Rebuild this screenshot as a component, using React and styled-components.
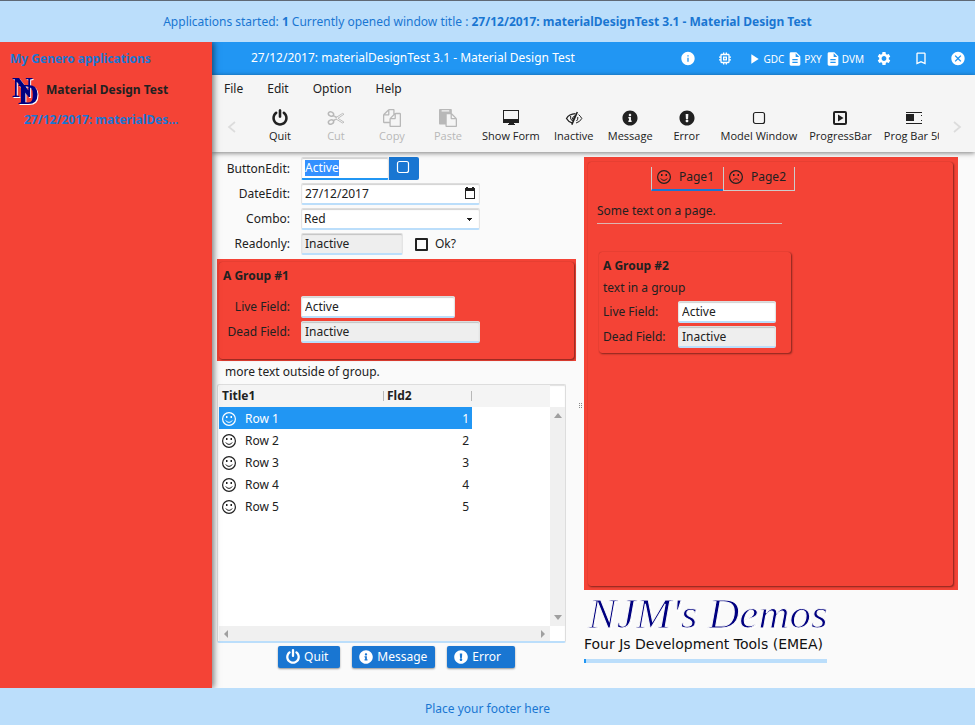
import React, { useEffect, useRef } from 'react';
import styled, { createGlobalStyle } from 'styled-components';
import {
  MdInfo, MdMemory, MdPlayArrow, MdDescription, MdSettings, MdBookmarkBorder, MdCancel,
} from 'react-icons/md';
import { FaInfoCircle, FaExclamationCircle } from 'react-icons/fa';

const GlobalStyle = createGlobalStyle`
  * { box-sizing: border-box; }
  body {
    margin: 0;
    font-family: "Noto Sans", sans-serif;
    font-size: 12px;
    line-height: 16px;
    color: #212121;
    background: #fafafa;
  }
  button, input, select { font: inherit; color: inherit; }
  button { border: 0; padding: 0; background: none; }
`;

const red = '#f44336';
const paleBlue = '#bbdefb';
const blue = '#1976d2';

/* ---------- icons ---------- */

const Svg = styled.svg`
  display: block;
  flex: none;
`;

const PowerIcon = ({ size = 18 }) => (
  <Svg width={size} height={size} viewBox="0 0 1792 1792" fill="currentColor">
    <path d="M1664 896q0 156-61 298t-164 245-245 164-298 61-298-61-245-164-164-245-61-298q0-182 80.5-343t226.5-270q43-32 95.5-25t83.5 50q32 42 24.5 94.5t-49.5 84.5q-98 74-151.5 181t-53.5 228q0 104 40.5 198.5t109.5 163.5 163.5 109.5 198.5 40.5 198.5-40.5 163.5-109.5 109.5-163.5 40.5-198.5q0-121-53.5-228t-151.5-181q-42-32-49.5-84.5t24.5-94.5q31-43 84-50t95 25q146 109 226.5 270t80.5 343zm-640-768v640q0 52-38 90t-90 38-90-38-38-90v-640q0-52 38-90t90-38 90 38 38 90z" />
  </Svg>
);

const CutIcon = () => (
  <Svg width="18" height="18" viewBox="0 0 18 18" fill="none" stroke="currentColor">
    <ellipse cx="4" cy="5" rx="2.7" ry="2.1" strokeWidth="1.5" transform="rotate(25 4 5)" />
    <ellipse cx="4" cy="13" rx="2.7" ry="2.1" strokeWidth="1.5" transform="rotate(-25 4 13)" />
    <path d="M6 6.8 9 8.6 15.5 4.4 17 5.2 11 9.3 17 13.2 15.5 14 9 10 6 11.4M6.4 6.4 10 8.2M6.4 12 10 9.8" strokeWidth="0.9" />
  </Svg>
);

const CopyIcon = () => (
  <Svg width="18" height="18" viewBox="0 0 1792 1792" fill="currentColor">
    <path d="M1696 384q40 0 68 28t28 68v1216q0 40-28 68t-68 28h-960q-40 0-68-28t-28-68v-288h-544q-40 0-68-28t-28-68v-672q0-40 20-88t48-76l408-408q28-28 76-48t88-20h416q40 0 68 28t28 68v328q68-40 128-40h416zm-544 213l-299 299h299v-299zm-640-384l-299 299h299v-299zm196 647l316-316v-416h-384v416q0 40-28 68t-68 28h-416v640h512v-256q0-40 20-88t48-76zm956 804v-1152h-384v416q0 40-28 68t-68 28h-416v640h896z" />
  </Svg>
);

const PasteIcon = () => (
  <Svg width="18" height="18" viewBox="0 0 1792 1792" fill="currentColor">
    <path d="M768 1664h896v-640h-416q-40 0-68-28t-28-68v-416h-384v1152zm256-1440v-64q0-13-9.5-22.5t-22.5-9.5h-704q-13 0-22.5 9.5t-9.5 22.5v64q0 13 9.5 22.5t22.5 9.5h704q13 0 22.5-9.5t9.5-22.5zm256 672h299l-299-299v299zm512 128v672q0 40-28 68t-68 28h-960q-40 0-68-28t-28-68v-160h-544q-40 0-68-28t-28-68v-1344q0-40 28-68t68-28h1088q40 0 68 28t28 68v328q21 13 36 28l408 408q28 28 48 76t20 88z" />
  </Svg>
);

const DesktopIcon = () => (
  <Svg width="18" height="18" viewBox="0 0 18 18" fill="currentColor">
    <path d="M1 1h16v13h-5v1h1v1H6v-1h1v-1H1zM2 2v8h14V2z" fillRule="evenodd" />
  </Svg>
);

const EyeSlashIcon = () => (
  <Svg width="18" height="18" viewBox="0 0 18 18" fill="none" stroke="currentColor">
    <path d="M7 13.800Q3.500 13 1.500 9.500 4 5 10.500 4.700" strokeWidth="1.300" />
    <path d="M13.600 5.600Q15.500 7 16.800 9.500 15 13 11 14" strokeWidth="1" />
    <path d="M12.300 3 6.800 15.600" strokeWidth="1.600" />
    <path d="M5.600 7Q5 10.500 7.500 12L10.300 6.500Q7 8 7.300 10.500M12.800 8Q13.300 10.500 11.500 12" strokeWidth="1" />
  </Svg>
);

const SquareIcon = ({ size = 18 }) => (
  <Svg width={size} height={size} viewBox="0 0 18 18" fill="none" stroke="currentColor" strokeWidth="1.200">
    <rect x="3.500" y="3.500" width="11" height="11" rx="2" />
  </Svg>
);

const PlaySquareIcon = () => (
  <Svg width="18" height="18" viewBox="0 0 18 18">
    <rect x="3" y="3" width="12" height="12" rx="1" fill="none" stroke="currentColor" strokeWidth="2" />
    <path d="M7 5.500v7l5.500-3.500z" fill="currentColor" />
  </Svg>
);

const HalfBarIcon = () => (
  <Svg width="18" height="18" viewBox="0 0 18 18" fill="currentColor">
    <path d="M1 3h16v1H1zM1 14h16v1H1zM1 5h8v7H1zM16 6h1v1h-1zM16 11h1v1h-1z" />
  </Svg>
);

const FaceIcon = ({ sad }) => (
  <Svg width="16" height="16" viewBox="0 0 16 16" fill="none" stroke="currentColor">
    <circle cx="8" cy="8" r="6.400" strokeWidth="1.200" />
    <path d={sad ? 'M5 11.500Q8 8 11 11.500' : 'M4.800 9.400Q5.800 11.400 8 11.400T11.200 9.400'} strokeWidth="1" />
    <path d="M5 5h1.500v2H5zM9.500 5H11v2H9.500z" fill="currentColor" stroke="none" />
  </Svg>
);

const CalendarIcon = () => (
  <Svg width="12" height="12" viewBox="0 0 12 12" fill="currentColor">
    <path d="M1 1h1V0h2v1h4V0h2v1h1v11H1zM2 4v7h8V4z" fillRule="evenodd" />
  </Svg>
);

const Chevron = ({ flip }) => (
  <Svg width="12" height="14" viewBox="0 0 12 14" fill="none" stroke="currentColor" strokeWidth="1.700">
    <path d={flip ? 'M3 2l6 5-6 5' : 'M9 2L3 7l6 5'} />
  </Svg>
);

const arrows = {
  up: 'M0 5l4-5 4 5z',
  down: 'M0 0l4 5 4-5z',
  left: 'M5 0v8L1 4z',
  right: 'M1 0v8l4-4z',
};
const Arrow = ({ dir }) => {
  const vertical = dir === 'up' || dir === 'down';
  const w = vertical ? 8 : 6;
  const h = vertical ? 5 : 8;
  return (
    <Svg width={w} height={h} viewBox={`0 0 ${w} ${h}`} fill="#a0a0a0"><path d={arrows[dir]} /></Svg>
  );
};

/* ---------- page frame ---------- */

const Page = styled.div`
  min-height: 100vh;
  display: flex;
  flex-direction: column;
`;

const Banner = styled.header`
  height: 42px;
  flex: none;
  display: flex;
  align-items: center;
  justify-content: center;
  border-top: 1px solid #5f6975;
  background: ${paleBlue};
  color: ${blue};
`;

const Footer = styled.footer`
  height: 37px;
  flex: none;
  display: flex;
  align-items: center;
  justify-content: center;
  padding-top: 4px;
  background: ${paleBlue};
  color: ${blue};
`;

const Body = styled.div`
  flex: 1;
  display: flex;
`;

const Sidebar = styled.aside`
  width: 212px;
  flex: none;
  position: relative;
  z-index: 1;
  padding: 9px 10px;
  background: ${red};
  box-shadow: 2px 0 6px rgba(0, 0, 0, 0.5);
  clip-path: inset(0 -12px 0 0);
  color: ${blue};
  font-weight: bold;
`;

const SideTitle = styled.h2`
  margin: 0;
  font-size: 12px;
`;

const AppEntry = styled.div`
  display: flex;
  align-items: center;
  gap: 4px;
  height: 45px;
  color: #212121;
`;

const Monogram = styled.svg`
  flex: none;
  font: bold 29px "Liberation Serif", serif;
  fill: #000080;
  filter: drop-shadow(1px 1px 0 #fff);
`;

const SessionLink = styled.a`
  display: block;
  margin: 0 21px 0 14px;
  overflow: hidden;
  white-space: nowrap;
  text-overflow: ellipsis;
  color: inherit;
  text-decoration: none;
`;

const Main = styled.main`
  flex: 1;
  min-width: 0;
`;

/* ---------- window bar, menu, toolbar ---------- */

const TitleBar = styled.div`
  display: flex;
  align-items: center;
  height: 33px;
  padding: 0 9px 0 39px;
  background: #2196f3;
  color: #fff;
`;

const WindowTitle = styled.h1`
  flex: 1;
  margin: 0;
  padding-bottom: 2px;
  font-size: 12px;
  font-weight: normal;
  white-space: nowrap;
`;

const BarButton = styled.button`
  display: flex;
  align-items: center;
  justify-content: center;
  width: 16px;
  margin-left: ${(p) => p.$gap || 21}px;
`;

const BarLink = styled.a`
  display: flex;
  align-items: center;
  gap: 1px;
  margin-left: ${(p) => p.$gap || 3}px;
  color: #fff;
  font-size: 10px;
  text-decoration: none;
`;

const Chrome = styled.div`
  position: relative;
  background: #f5f5f5;
  box-shadow: 0 1px 5px rgba(0, 0, 0, 0.5);
`;

const MenuBar = styled.nav`
  display: flex;
  height: 27px;
`;

const MenuButton = styled.button`
  padding: 0 12px;
`;

const ToolBar = styled.div`
  display: flex;
  height: 50px;
`;

const ScrollButton = styled.button`
  display: flex;
  align-items: center;
  justify-content: center;
  width: ${(p) => p.$width}px;
  flex: none;
  color: #dcdcdc;
`;

const ToolList = styled.div`
  flex: 1;
  min-width: 0;
  display: flex;
  overflow: hidden;
`;

const ToolButton = styled.button`
  display: flex;
  flex-direction: column;
  align-items: center;
  gap: 1px;
  min-width: 56px;
  flex: none;
  padding: 7px 6px 0;
  font-family: "Open Sans", "Noto Sans", sans-serif;
  font-size: 11px;
  line-height: 16px;
  white-space: nowrap;
  &:disabled { color: #b8b8b8; }
`;

/* ---------- form ---------- */

const Content = styled.div`
  display: grid;
  grid-template-columns: minmax(0, 359fr) 8px minmax(0, 374fr);
  padding: 5px 17px 0 5px;
`;

const Column = styled.div`
  min-width: 0;
`;

const Splitter = styled.div`
  display: flex;
  align-items: center;
  justify-content: center;
  height: 496px;
`;

const Grip = styled.span`
  width: 3px;
  height: 5px;
  border-left: 1px dotted #888;
  border-right: 1px dotted #888;
`;

const Fields = styled.div`
  display: grid;
  grid-template-columns: ${(p) => p.$label}px 1fr;
  column-gap: 11px;
  row-gap: 3px;
`;

const Label = styled.label`
  align-self: center;
  text-align: ${(p) => p.$align || 'right'};
`;

const Control = styled.div`
  display: flex;
  align-items: center;
  width: ${(p) => p.$width}px;
  height: ${(p) => p.$height || 22}px;
  padding-left: 3px;
  border: solid;
  border-width: 1px 1px 2px;
  border-color: #ddd #e4e4e4 ${(p) => (p.$focus ? '#2196f3' : paleBlue)};
  border-radius: 2px;
  background: ${(p) => (p.$off ? '#eee' : '#fff')};
  box-shadow: inset 0 1px 1px rgba(0, 0, 0, 0.18);
`;

const Input = styled.input`
  flex: 1;
  min-width: 0;
  height: 16px;
  padding: 0;
  border: 0;
  outline: 0;
  background: none;
  &::selection { background: #3390ff; color: #fff; }
`;

const Select = styled.select`
  flex: 1;
  height: 18px;
  padding: 0;
  margin-left: -1px;
  border: 0;
  outline: 0;
  appearance: none;
  background:
    linear-gradient(#212121, #212121) no-repeat right 7px top 8px / 5px 1px,
    linear-gradient(#212121, #212121) no-repeat right 8px top 9px / 3px 1px,
    linear-gradient(#212121, #212121) no-repeat right 9px top 10px / 1px 1px;
`;

const FieldLine = styled.div`
  display: flex;
  align-items: center;
`;

const BoxButton = styled.button`
  display: flex;
  align-items: center;
  justify-content: center;
  width: 30px;
  height: 23px;
  padding: 0 2px 3px 0;
  border-radius: 0 2px 2px 0;
  background: ${blue};
  color: #fff;
`;

const IconButton = styled.button`
  padding: 0 3px 2px 0;
`;

const CheckLabel = styled.label`
  display: flex;
  align-items: center;
  gap: 7px;
  margin-left: 12px;
`;

const Check = styled.input`
  appearance: none;
  width: 13px;
  height: 13px;
  margin: 0;
  border: 2px solid #212121;
  border-radius: 1px;
  &:checked { background: #212121; }
`;

const GroupOuter = styled.section`
  margin-top: 4px;
  padding: 3px 2px 2px;
  background: ${red};
`;

const Group = styled.div`
  height: 97px;
  padding: 6px 4px 0;
  border-radius: 3px;
  box-shadow: 1px 1px 2px rgba(0, 0, 0, 0.45), 0 0 1px rgba(0, 0, 0, 0.3);
`;

const GroupTitle = styled.h3`
  margin: 0 0 ${(p) => p.$gap}px;
  font-size: 12px;
`;

const Note = styled.p`
  margin: 0;
  padding: 3px 8px 4px;
`;

/* ---------- table ---------- */

const TableBox = styled.div`
  display: grid;
  grid-template-columns: minmax(0, 1fr) 15px;
  grid-template-rows: 22px 219px 15px;
  margin-right: 10px;
  padding-left: 1px;
  border: solid #ddd;
  border-width: 1px 1px 2px;
  border-bottom-color: ${paleBlue};
  border-radius: 2px;
  background: #fff;
  box-shadow: inset 0 1px 1px rgba(0, 0, 0, 0.12);
`;

const TableArea = styled.div`
  grid-row: span 2;
  background: linear-gradient(#f4f4f4, #f4f4f4) no-repeat 0 0 / 100% 22px;
`;

const Table = styled.table`
  width: 253px;
  table-layout: fixed;
  border-collapse: collapse;
`;

const HeadCell = styled.th`
  width: ${(p) => p.$width}px;
  height: 22px;
  padding: 0 3px;
  text-align: left;
  background: linear-gradient(#b8b8b8, #b8b8b8) no-repeat right 0 center / 1px 10px;
`;

const Row = styled.tr`
  background: ${(p) => (p.$selected ? '#2196f3' : 'transparent')};
  color: ${(p) => (p.$selected ? '#fff' : '#212121')};
`;

const Cell = styled.td`
  height: 22px;
  padding: 1px 3px 0 2px;
  text-align: ${(p) => p.$align || 'left'};
`;

const CellInner = styled.span`
  display: flex;
  align-items: center;
  gap: 8px;
`;

const Track = styled.div`
  display: flex;
  flex-direction: ${(p) => (p.$horizontal ? 'row' : 'column')};
  align-items: center;
  justify-content: space-between;
  padding: ${(p) => (p.$horizontal ? '0 4px' : '6px 0')};
  background: #f0f0f0;
`;

const Actions = styled.div`
  display: flex;
  justify-content: center;
  gap: 12px;
  margin-top: 3px;
`;

const Action = styled.button`
  display: flex;
  align-items: center;
  gap: ${(p) => p.$gap || 4}px;
  height: 22px;
  padding: 0 ${(p) => p.$right || 8}px 0 7px;
  border-radius: 2px;
  background: ${blue};
  color: #fff;
  box-shadow: 0 1px 2px rgba(0, 0, 0, 0.4);
`;

/* ---------- folder pane ---------- */

const Folder = styled.section`
  padding: 5px 5px 4px 4px;
  background: ${red};
`;

const FolderInner = styled.div`
  height: 424px;
  padding: 5px 9px 0;
  border-radius: 3px;
  box-shadow: 1px 1px 2px rgba(0, 0, 0, 0.45), 0 0 1px rgba(0, 0, 0, 0.3);
`;

const Tabs = styled.div`
  display: flex;
  margin-left: 54px;
`;

const Tab = styled.button`
  display: flex;
  align-items: center;
  gap: 7px;
  width: 72px;
  height: 24px;
  padding: 0 0 ${(p) => (p.$active ? 2 : 3)}px 4px;
  border: solid #ccc;
  border-width: 0 ${(p) => (p.$active ? 0 : 1)}px 1px 1px;
  ${(p) => p.$active && `border-bottom: 2px solid ${blue};`}
`;

const PageText = styled.p`
  width: 185px;
  margin: 12px 0 28px;
  padding-bottom: 4px;
  border-bottom: 1px solid #ddb5b1;
`;

const InnerGroup = styled.div`
  width: 192px;
  height: 101px;
  margin-left: 2px;
  padding: 6px 4px 0;
  border-radius: 3px;
  box-shadow: 1px 1px 2px rgba(0, 0, 0, 0.45), 0 0 1px rgba(0, 0, 0, 0.3);
`;

const GroupText = styled.p`
  margin: 0 0 5px;
`;

const Brand = styled.div`
  height: 67px;
  white-space: nowrap;
`;

const BrandName = styled.div`
  padding: 5px 0 0 4px;
  font: italic 43px/38px "Liberation Serif", serif;
  color: #000080;
  -webkit-text-stroke: 1px #fafafa;
  filter: drop-shadow(1px 1px 0 #fff);
`;

const BrandLine = styled.div`
  padding-top: 3px;
  font: 14px/16px "DejaVu Sans", sans-serif;
  color: #111;
`;

const Progress = styled.progress`
  display: block;
  width: 243px;
  height: 4px;
  margin-top: 2px;
  border: 0;
  appearance: none;
  background: ${paleBlue};
  &::-webkit-progress-bar { background: ${paleBlue}; }
  &::-webkit-progress-value { background: #2196f3; }
`;

const tools = [
  { label: 'Quit', icon: <PowerIcon /> },
  { label: 'Cut', icon: <CutIcon />, disabled: true },
  { label: 'Copy', icon: <CopyIcon />, disabled: true },
  { label: 'Paste', icon: <PasteIcon />, disabled: true },
  { label: 'Show Form', icon: <DesktopIcon /> },
  { label: 'Inactive', icon: <EyeSlashIcon /> },
  { label: 'Message', icon: <FaInfoCircle size={18} viewBox="-40 -40 592 592" /> },
  { label: 'Error', icon: <FaExclamationCircle size={18} viewBox="-40 -40 592 592" /> },
  { label: 'Model Window', icon: <SquareIcon /> },
  { label: 'ProgressBar', icon: <PlaySquareIcon /> },
  { label: 'Prog Bar 50', icon: <HalfBarIcon /> },
];

const TextField = ({ id, width, value, off }) => (
  <Control $width={width} $off={off}>
    <Input id={id} defaultValue={value} readOnly={off} />
  </Control>
);

export default function App() {
  const first = useRef(null);
  useEffect(() => {
    first.current.focus();
    first.current.select();
  }, []);

  return (
    <Page>
      <GlobalStyle />
      <Banner>
        <span>
          Applications started: <b>1</b> Currently opened window title :{' '}
          <b>27/12/2017: materialDesignTest 3.1 - Material Design Test</b>
        </span>
      </Banner>
      <Body>
        <Sidebar>
          <SideTitle>My Genero applications</SideTitle>
          <AppEntry>
            <Monogram width="32" height="40" viewBox="0 0 32 40">
              <text x="2" y="27">N</text>
              <text x="8" y="34">D</text>
            </Monogram>
            Material Design Test
          </AppEntry>
          <SessionLink href="#session">27/12/2017: materialDesignTest 3.1</SessionLink>
        </Sidebar>
        <Main>
          <TitleBar>
            <WindowTitle>27/12/2017: materialDesignTest 3.1 - Material Design Test</WindowTitle>
            <BarButton aria-label="Information"><MdInfo size={17} /></BarButton>
            <BarButton aria-label="Debug"><MdMemory size={17} /></BarButton>
            <BarLink href="#gdc" $gap={13}><MdPlayArrow size={16} />GDC</BarLink>
            <BarLink href="#pxy"><MdDescription size={16} />PXY</BarLink>
            <BarLink href="#dvm"><MdDescription size={16} />DVM</BarLink>
            <BarButton aria-label="Settings" $gap={12}><MdSettings size={17} /></BarButton>
            <BarButton aria-label="Bookmark"><MdBookmarkBorder size={17} /></BarButton>
            <BarButton aria-label="Close"><MdCancel size={17} /></BarButton>
          </TitleBar>
          <Chrome>
            <MenuBar>
              {['File', 'Edit', 'Option', 'Help'].map((m) => <MenuButton key={m}>{m}</MenuButton>)}
            </MenuBar>
            <ToolBar>
              <ScrollButton $width={40} aria-label="Scroll left"><Chevron /></ScrollButton>
              <ToolList>
                {tools.map((t) => (
                  <ToolButton key={t.label} disabled={t.disabled}>{t.icon}{t.label}</ToolButton>
                ))}
              </ToolList>
              <ScrollButton $width={36} aria-label="Scroll right"><Chevron flip /></ScrollButton>
            </ToolBar>
          </Chrome>
          <Content>
            <Column>
              <Fields $label={73}>
                <Label htmlFor="buttonedit">ButtonEdit:</Label>
                <FieldLine>
                  <Control $width={88} $height={23} $focus>
                    <Input id="buttonedit" ref={first} defaultValue="Active" />
                  </Control>
                  <BoxButton aria-label="Open"><SquareIcon size={18} /></BoxButton>
                </FieldLine>
                <Label htmlFor="dateedit">DateEdit:</Label>
                <Control $width={179}>
                  <Input id="dateedit" defaultValue="27/12/2017" />
                  <IconButton aria-label="Pick date"><CalendarIcon /></IconButton>
                </Control>
                <Label htmlFor="combo">Combo:</Label>
                <Control $width={179}>
                  <Select id="combo" defaultValue="Red"><option>Red</option></Select>
                </Control>
                <Label htmlFor="readonly">Readonly:</Label>
                <FieldLine>
                  <TextField id="readonly" width={102} value="Inactive" off />
                  <CheckLabel><Check type="checkbox" />Ok?</CheckLabel>
                </FieldLine>
              </Fields>
              <GroupOuter>
                <Group>
                  <GroupTitle $gap={12}>A Group #1</GroupTitle>
                  <Fields $label={67}>
                    <Label htmlFor="live1">Live Field:</Label>
                    <TextField id="live1" width={154} value="Active" />
                    <Label htmlFor="dead1">Dead Field:</Label>
                    <TextField id="dead1" width={179} value="Inactive" off />
                  </Fields>
                </Group>
              </GroupOuter>
              <Note>more text outside of group.</Note>
              <TableBox>
                <TableArea>
                  <Table>
                    <thead>
                      <tr>
                        <HeadCell $width={165}>Title1</HeadCell>
                        <HeadCell $width={88}>Fld2</HeadCell>
                      </tr>
                    </thead>
                    <tbody>
                      {[1, 2, 3, 4, 5].map((n) => (
                        <Row key={n} $selected={n === 1}>
                          <Cell><CellInner><FaceIcon />Row {n}</CellInner></Cell>
                          <Cell $align="right">{n}</Cell>
                        </Row>
                      ))}
                    </tbody>
                  </Table>
                </TableArea>
                <span />
                <Track><Arrow dir="up" /><Arrow dir="down" /></Track>
                <Track $horizontal><Arrow dir="left" /><Arrow dir="right" /></Track>
              </TableBox>
              <Actions>
                <Action $gap={3} $right={12}><PowerIcon size={16} />Quit</Action>
                <Action><FaInfoCircle size={14} />Message</Action>
                <Action $right={14}><FaExclamationCircle size={14} />Error</Action>
              </Actions>
            </Column>
            <Splitter><Grip /></Splitter>
            <Column>
              <Folder>
                <FolderInner>
                  <Tabs role="tablist">
                    <Tab role="tab" aria-selected="true" $active><FaceIcon />Page1</Tab>
                    <Tab role="tab" aria-selected="false"><FaceIcon sad />Page2</Tab>
                  </Tabs>
                  <PageText>Some text on a page.</PageText>
                  <InnerGroup>
                    <GroupTitle $gap={6}>A Group #2</GroupTitle>
                    <GroupText>text in a group</GroupText>
                    <Fields $label={64}>
                      <Label $align="left" htmlFor="live2">Live Field:</Label>
                      <TextField id="live2" width={98} value="Active" />
                      <Label $align="left" htmlFor="dead2">Dead Field:</Label>
                      <TextField id="dead2" width={98} value="Inactive" off />
                    </Fields>
                  </InnerGroup>
                </FolderInner>
              </Folder>
              <Brand>
                <BrandName>NJM's Demos</BrandName>
                <BrandLine>Four Js Development Tools (EMEA)</BrandLine>
              </Brand>
              <Progress value="2" max="243" aria-label="Progress" />
            </Column>
          </Content>
        </Main>
      </Body>
      <Footer>Place your footer here</Footer>
    </Page>
  );
}
